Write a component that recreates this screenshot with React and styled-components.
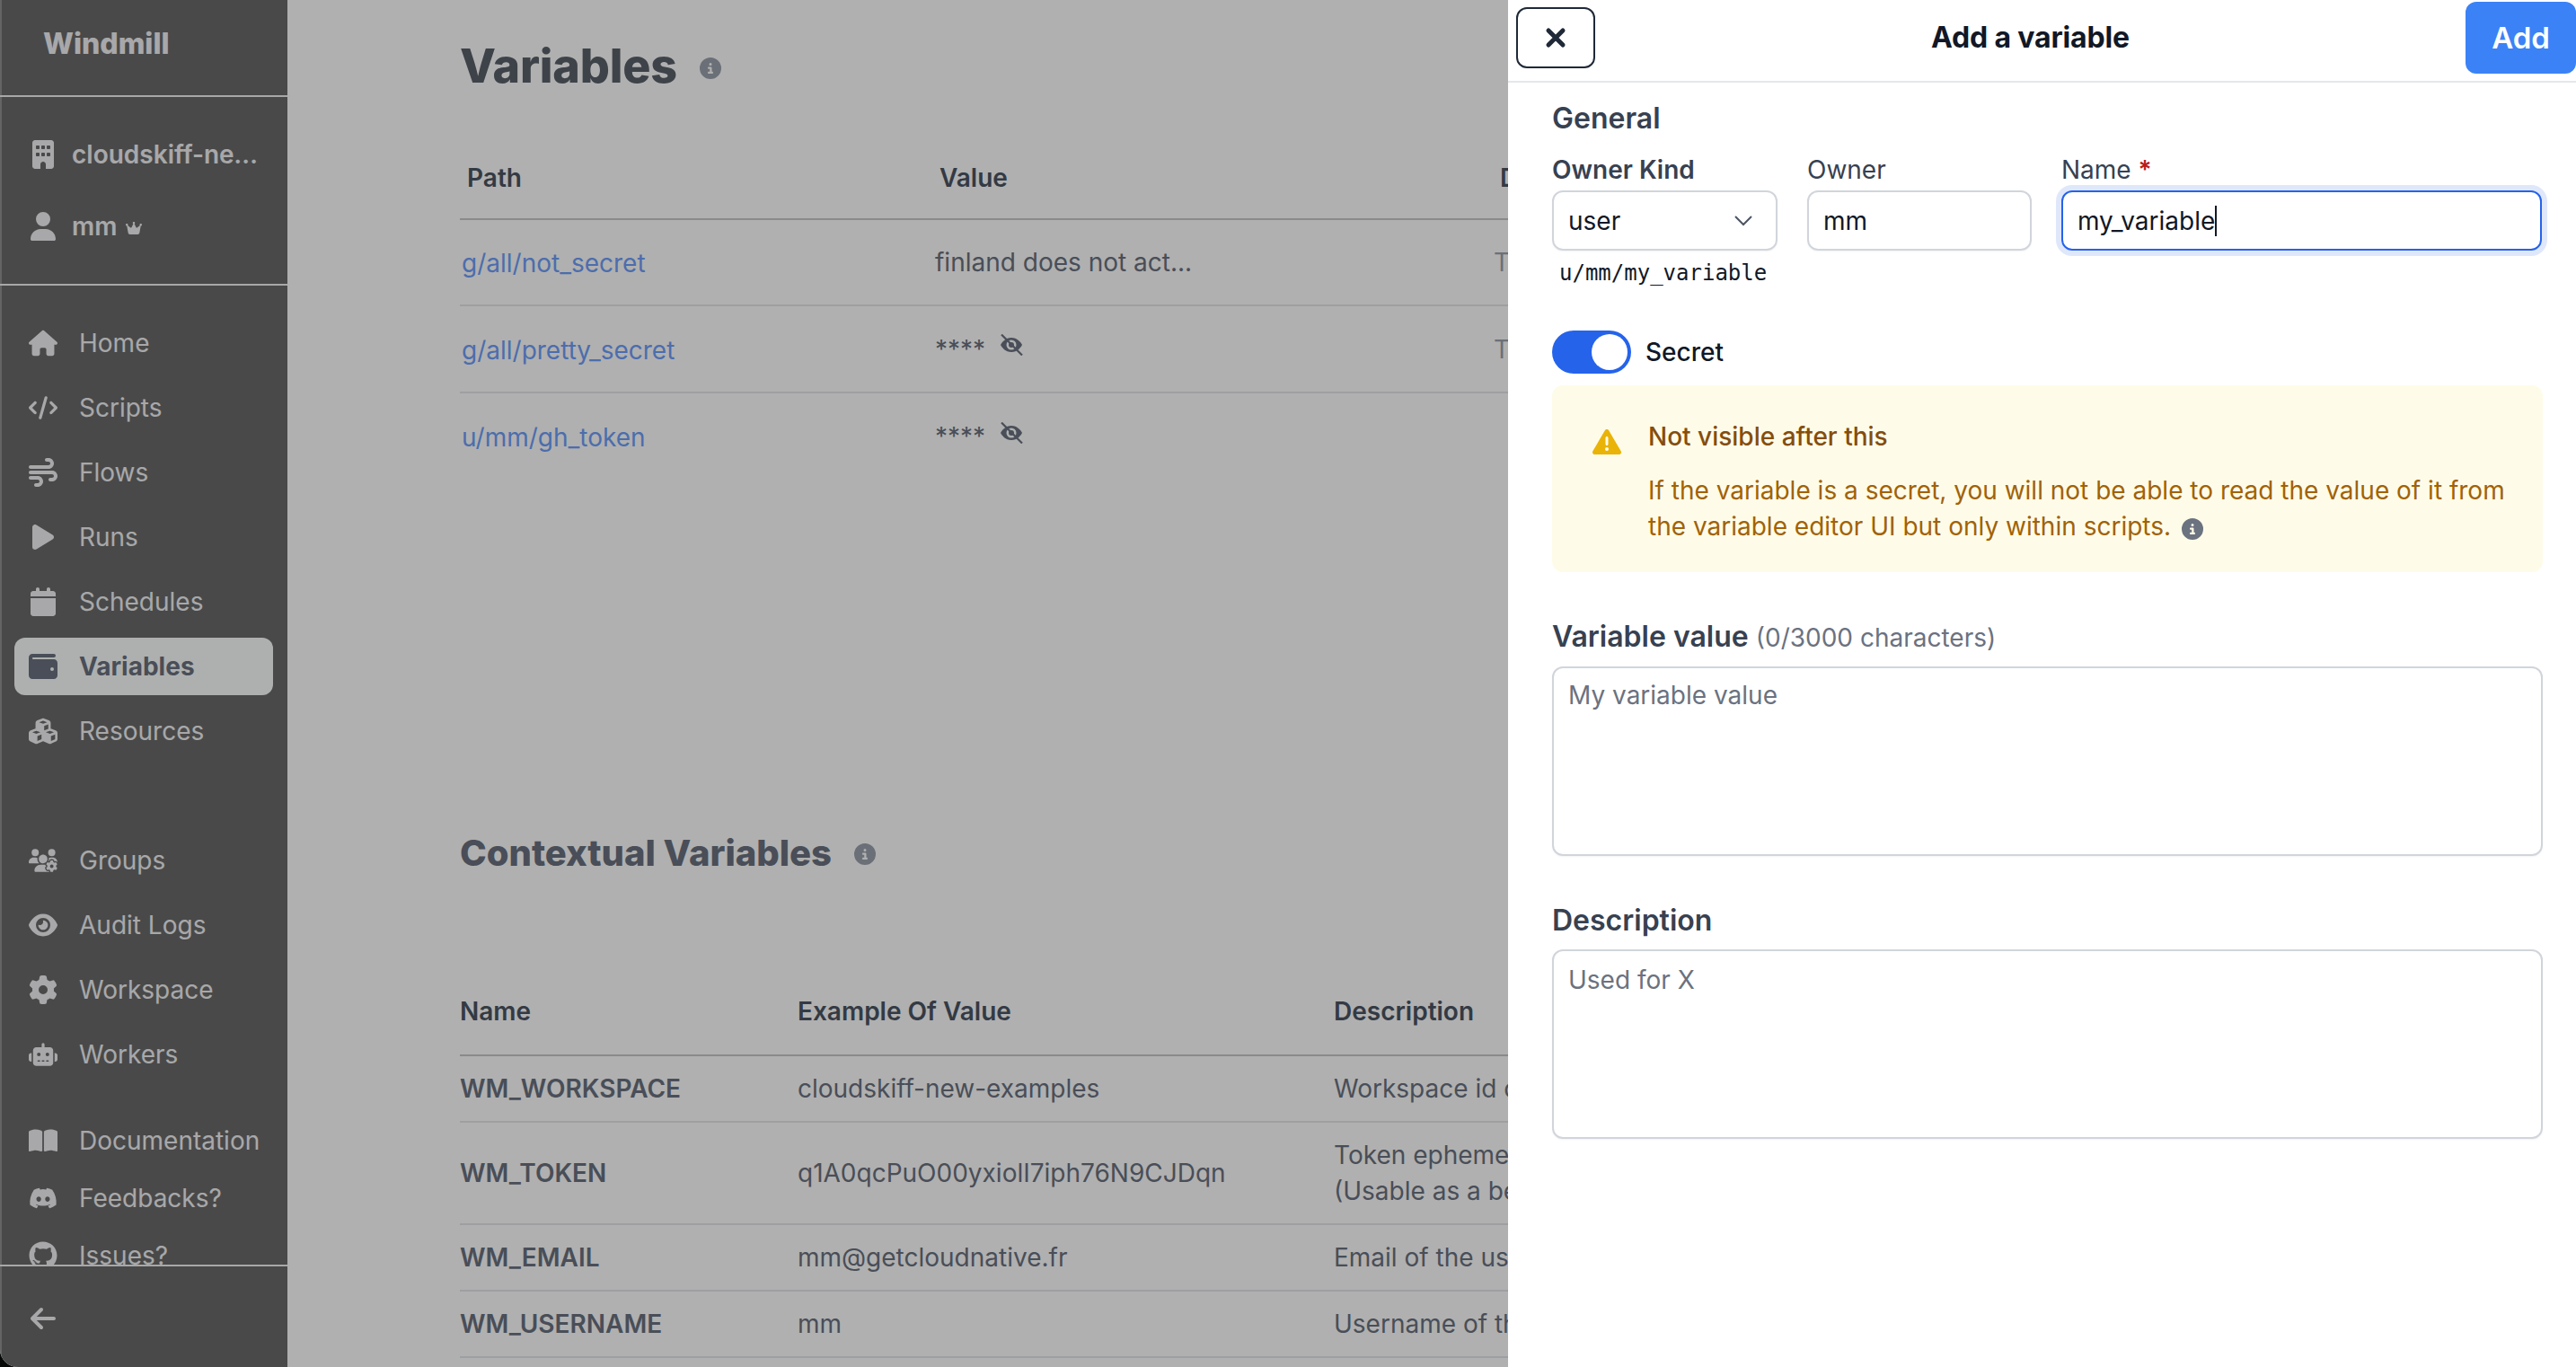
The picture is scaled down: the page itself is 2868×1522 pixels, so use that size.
import React from "react";
import styled, { createGlobalStyle } from "styled-components";
import {
  FaBuilding, FaUser, FaCrown, FaHouse, FaCode, FaWind, FaPlay, FaCalendar, FaWallet, FaCubes,
  FaUsersGear, FaEye, FaGear, FaRobot, FaBookOpen, FaDiscord, FaGithub, FaArrowLeft, FaCircleInfo,
  FaTriangleExclamation,
} from "react-icons/fa6";

const Global = createGlobalStyle`
  html, body { margin: 0; padding: 0; background: #050807; }
  * { box-sizing: border-box; }
  body { font-family: Inter, "Liberation Sans", sans-serif; font-size: 28px; }
`;

const Page = styled.div`
  position: relative;
  display: flex;
  width: 2868px;
  height: 1522px;
  overflow: hidden;
  background: #fff;
  border-bottom-left-radius: 20px;
`;

const Sidebar = styled.aside`
  flex: 0 0 320px;
  display: flex;
  flex-direction: column;
  height: 1522px;
  background: #6b6b6b;
  border-left: 2px solid #919191;
  color: #f3f4f6;
`;

const Brand = styled.div`
  flex: 0 0 108px;
  display: flex;
  align-items: center;
  padding: 0 0 10px 48px;
  font-size: 32px;
  font-weight: 800;
  color: #f3f4f6;
  border-bottom: 2px solid #f3f4f6;
  margin-left: -2px;
`;

const Account = styled.div`
  display: flex;
  flex-direction: column;
  padding: 24px 0;
  border-bottom: 2px solid #f3f4f6;
  margin-left: -2px;
`;

const AccountRow = styled.div`
  height: 80px;
  display: flex;
  align-items: center;
  gap: 16px;
  padding-left: 32px;
  font-weight: 600;
  font-size: 28px;
`;

const AccountIcon = styled.span`
  flex: 0 0 32px;
  display: flex;
  justify-content: center;
  font-size: 32px;
`;

const Ellipsis = styled.span`
  width: 208px;
  overflow: hidden;
  white-space: nowrap;
  text-overflow: ellipsis;
`;

const Crown = styled(FaCrown)`
  width: 20px;
  height: 16px;
  margin: 4px 0 0 -7px;
`;

const Nav = styled.nav`
  flex: 1;
  min-height: 0;
  overflow: hidden;
  padding: 32px 14px 0;
  display: flex;
  flex-direction: column;
`;

const NavGroup = styled.div`
  display: flex;
  flex-direction: column;
  gap: ${(p) => p.$gap}px;
  margin-bottom: ${(p) => p.$after}px;
`;

const NavItem = styled.div`
  flex: 0 0 64px;
  display: flex;
  align-items: center;
  gap: 24px;
  width: 288px;
  padding-left: 16px;
  border-radius: 12px;
  font-size: 28px;
  font-weight: ${(p) => (p.$active ? 700 : 400)};
  color: ${(p) => (p.$active ? "#6b7280" : "#f3f4f6")};
  background: ${(p) => (p.$active ? "#fcfffe" : "transparent")};
  svg { width: 32px; height: 32px; flex: 0 0 32px; }
`;

const Collapse = styled.div`
  flex: 0 0 114px;
  display: flex;
  align-items: center;
  padding: 4px 0 0 32px;
  border-top: 2px solid #f3f4f6;
  margin-left: -2px;
  svg { width: 32px; height: 32px; }
`;

const Main = styled.main`
  flex: 1;
  min-width: 0;
  padding: 0 0 0 192px;
  color: #4b5563;
`;

const PageTitle = styled.h1`
  margin: 0;
  height: 146px;
  display: flex;
  align-items: center;
  gap: 25px;
  font-size: 52px;
  font-weight: 800;
  letter-spacing: -0.2px;
  color: #5b616b;
  svg { width: 24px; height: 24px; color: #9ca3af; margin-top: 6px; }
`;

const SectionTitle = styled.h2`
  margin: 391px 0 105px;
  height: 48px;
  display: flex;
  align-items: center;
  gap: 25px;
  font-size: 40px;
  font-weight: 800;
  color: #6b7280;
  svg { width: 24px; height: 24px; color: #9ca3af; margin-top: 4px; }
`;

const Row = styled.div`
  display: grid;
  grid-template-columns: ${(p) => p.$cols};
  width: 1900px;
  height: ${(p) => p.$h}px;
  align-items: center;
  border-bottom: ${(p) => (p.$bare ? "0" : `2px solid ${p.$head ? "#c9c9c9" : "#e5e7eb"}`)};
  white-space: nowrap;
`;

const HeadRow = styled(Row)`
  padding-top: ${(p) => p.$top || 0}px;
`;

const HeadCell = styled.div`
  font-weight: 600;
  color: #4b5563;
  padding-left: ${(p) => p.$pad || 0}px;
`;

const PathLink = styled.div`
  color: #6f9ffb;
  padding: 2px 0 0 2px;
`;

const ValueCell = styled.div`
  display: flex;
  align-items: center;
  gap: 16px;
  color: #6b7280;
`;

const EyeOff = styled.svg`
  width: 26px;
  height: 24px;
  margin-top: -9px;
  color: #6b7280;
`;

const FaintCell = styled.div`
  color: #9ca3af;
`;

const NameCell = styled.div`
  font-weight: 600;
  color: #6b7280;
`;

const BodyCell = styled.div`
  color: #6b7280;
  line-height: 40px;
`;

const Overlay = styled.div`
  position: absolute;
  inset: 0;
  background: rgba(0, 0, 0, 0.31);
`;

const Drawer = styled.section`
  position: absolute;
  top: 0;
  right: 0;
  bottom: 0;
  width: 1189px;
  background: #fff;
  display: flex;
  flex-direction: column;
`;

const DrawerHead = styled.header`
  flex: 0 0 92px;
  display: flex;
  align-items: flex-start;
  justify-content: space-between;
  border-bottom: 2px solid #e5e7eb;
  padding-left: 9px;
`;

const CloseButton = styled.button`
  width: 88px;
  height: 68px;
  margin-top: 8px;
  display: flex;
  align-items: center;
  justify-content: center;
  background: #fff;
  border: 2px solid #1f2937;
  border-radius: 12px;
  color: #1f2937;
  padding: 0;
`;

const DrawerTitle = styled.div`
  align-self: center;
  font-size: 32px;
  font-weight: 700;
  color: #111827;
  margin-top: -8px;
  letter-spacing: -0.15px;
`;

const AddButton = styled.button`
  width: 123px;
  height: 80px;
  margin-top: 2px;
  background: #3b82f6;
  color: #fff;
  border: 0;
  border-radius: 12px;
  font: 600 33px Inter, sans-serif;
  padding: 0;
`;

const DrawerBody = styled.div`
  padding: 20px 37px 0 49px;
  display: flex;
  flex-direction: column;
`;

const SubTitle = styled.div`
  font-size: 32px;
  font-weight: 600;
  line-height: 40px;
  color: #374151;
  margin-top: ${(p) => p.$top || 0}px;
`;

const Muted = styled.span`
  font-size: 28px;
  font-weight: 400;
  color: #6b7280;
`;

const OwnerGrid = styled.div`
  display: grid;
  grid-template-columns: 251px 250px 535px;
  column-gap: 33px;
  row-gap: 3px;
  margin-top: 17px;
`;

const FieldLabel = styled.div`
  line-height: 40px;
  font-size: 28px;
  font-weight: ${(p) => (p.$bold ? 600 : 400)};
  color: #374151;
`;

const Required = styled.span`
  color: #b91c1c;
  font-weight: 600;
`;

const Box = styled.div`
  height: 67px;
  display: flex;
  align-items: center;
  justify-content: space-between;
  padding: 0 24px 0 16px;
  font-size: 28px;
  color: #111827;
  border: 2px solid #d1d5db;
  border-radius: 12px;
  box-shadow: 0 1px 2px rgba(0, 0, 0, 0.05);
`;

const FocusBox = styled(Box)`
  justify-content: flex-start;
  border-color: #2563eb;
  box-shadow: 0 0 0 6px #dfe7fb;
`;

const Caret = styled.span`
  display: inline-block;
  width: 2px;
  height: 34px;
  background: #111827;
`;

const PathHint = styled.div`
  font-family: "DejaVu Sans Mono", monospace;
  font-size: 24px;
  line-height: 32px;
  color: #111827;
  margin: 9px 0 0 8px;
`;

const SecretRow = styled.div`
  display: flex;
  align-items: center;
  gap: 16px;
  margin-top: 48px;
  font-size: 28px;
  font-weight: 500;
  color: #111827;
`;

const Toggle = styled.div`
  width: 88px;
  height: 48px;
  display: flex;
  justify-content: flex-end;
  align-items: center;
  padding-right: 4px;
  border-radius: 24px;
  background: #2563eb;
`;

const Knob = styled.span`
  width: 40px;
  height: 40px;
  border-radius: 50%;
  background: #fff;
`;

const Alert = styled.div`
  margin-top: 13px;
  height: 208px;
  padding: 37px 32px 0 45px;
  display: flex;
  gap: 30px;
  background: #fefce8;
  border-radius: 12px;
`;

const AlertIcon = styled(FaTriangleExclamation)`
  flex: 0 0 32px;
  width: 32px;
  height: 32px;
  margin-top: 10px;
  color: #eab308;
`;

const AlertTitle = styled.div`
  line-height: 40px;
  font-size: 28px;
  font-weight: 500;
  color: #854d0e;
`;

const AlertText = styled.div`
  margin-top: 20px;
  line-height: 40px;
  font-size: 28px;
  color: #a16207;
  svg { width: 24px; height: 24px; color: #6b7280; margin-left: 12px; vertical-align: -5px; }
`;

const TextArea = styled.textarea`
  display: block;
  width: 100%;
  height: 211px;
  margin-top: 12px;
  padding: ${(p) => p.$top}px 16px 12px;
  resize: none;
  font: 28px/36px Inter, sans-serif;
  border: 2px solid #d1d5db;
  border-radius: 12px;
  outline: none;
  box-shadow: 0 1px 2px rgba(0, 0, 0, 0.05);
  &::placeholder { color: #6b7280; opacity: 1; }
`;

const Chevron = () => (
  <svg width="24" height="24" viewBox="0 0 24 24" fill="none" stroke="#4b5563" strokeWidth="2">
    <path d="M3 7l9 9 9-9" />
  </svg>
);

const CloseMark = () => (
  <svg width="24" height="24" viewBox="0 0 24 24" fill="none" stroke="currentColor" strokeWidth="5" strokeLinecap="round">
    <path d="M4 4l16 16M20 4L4 20" />
  </svg>
);

const HiddenEye = () => (
  <EyeOff viewBox="0 0 26 24">
    <path fill="currentColor" d="M13 4C6.5 4 2.5 9 1 12c1.5 3 5.500 8 12 8s10.500-5 12-8c-1.500-3-5.500-8-12-8z" />
    <circle cx="13" cy="12" r="5.500" fill="#fff" />
    <circle cx="13" cy="12" r="3" fill="currentColor" />
    <path d="M2 0.500L25 23.500" stroke="currentColor" strokeWidth="2.200" />
  </EyeOff>
);

const V1 = "529px 622px 1fr";
const V2 = "376px 597px 1fr";

export default function App() {
  return (
    <Page>
      <Global />
      <Sidebar>
        <Brand>Windmill</Brand>
        <Account>
          <AccountRow><AccountIcon><FaBuilding /></AccountIcon><Ellipsis>cloudskiff-new-examples</Ellipsis></AccountRow>
          <AccountRow><AccountIcon><FaUser /></AccountIcon>mm <Crown /></AccountRow>
        </Account>
        <Nav>
          <NavGroup $gap={8} $after={80}>
            <NavItem><FaHouse />Home</NavItem>
            <NavItem><FaCode />Scripts</NavItem>
            <NavItem><FaWind />Flows</NavItem>
            <NavItem><FaPlay />Runs</NavItem>
            <NavItem><FaCalendar />Schedules</NavItem>
            <NavItem $active><FaWallet />Variables</NavItem>
            <NavItem><FaCubes />Resources</NavItem>
          </NavGroup>
          <NavGroup $gap={8} $after={32}>
            <NavItem><FaUsersGear />Groups</NavItem>
            <NavItem><FaEye />Audit Logs</NavItem>
            <NavItem><FaGear />Workspace</NavItem>
            <NavItem><FaRobot />Workers</NavItem>
          </NavGroup>
          <NavGroup $gap={0} $after={0}>
            <NavItem><FaBookOpen />Documentation</NavItem>
            <NavItem><FaDiscord />Feedbacks?</NavItem>
            <NavItem><FaGithub />Issues?</NavItem>
          </NavGroup>
        </Nav>
        <Collapse><FaArrowLeft /></Collapse>
      </Sidebar>

      <Main>
        <PageTitle>Variables <FaCircleInfo /></PageTitle>
        <HeadRow $cols={V1} $h={99} $head $top={7}>
          <HeadCell $pad={8}>Path</HeadCell>
          <HeadCell $pad={5}>Value</HeadCell>
          <HeadCell $pad={7}>Description</HeadCell>
        </HeadRow>
        <Row $cols={V1} $h={96}>
          <PathLink>g/all/not_secret</PathLink>
          <ValueCell>finland does not act...</ValueCell>
          <FaintCell>This is not a secret</FaintCell>
        </Row>
        <Row $cols={V1} $h={97}>
          <PathLink>g/all/pretty_secret</PathLink>
          <ValueCell>**** <HiddenEye /></ValueCell>
          <FaintCell>This is a secret</FaintCell>
        </Row>
        <Row $cols={V1} $h={96} $bare>
          <PathLink>u/mm/gh_token</PathLink>
          <ValueCell>**** <HiddenEye /></ValueCell>
        </Row>

        <SectionTitle>Contextual Variables <FaCircleInfo /></SectionTitle>
        <HeadRow $cols={V2} $h={98} $head>
          <HeadCell>Name</HeadCell>
          <HeadCell>Example Of Value</HeadCell>
          <HeadCell>Description</HeadCell>
        </HeadRow>
        <Row $cols={V2} $h={74}>
          <NameCell>WM_WORKSPACE</NameCell>
          <BodyCell>cloudskiff-new-examples</BodyCell>
          <BodyCell>Workspace id of the current script</BodyCell>
        </Row>
        <Row $cols={V2} $h={114}>
          <NameCell>WM_TOKEN</NameCell>
          <BodyCell>q1A0qcPuO00yxiolI7iph76N9CJDqn</BodyCell>
          <BodyCell>Token ephemeral to the current script<br />(Usable as a bearer token)</BodyCell>
        </Row>
        <Row $cols={V2} $h={74}>
          <NameCell>WM_EMAIL</NameCell>
          <BodyCell>mm@getcloudnative.fr</BodyCell>
          <BodyCell>Email of the user that executed the script</BodyCell>
        </Row>
        <Row $cols={V2} $h={74}>
          <NameCell>WM_USERNAME</NameCell>
          <BodyCell>mm</BodyCell>
          <BodyCell>Username of the user that executed the script</BodyCell>
        </Row>
      </Main>

      <Overlay />

      <Drawer>
        <DrawerHead>
          <CloseButton><CloseMark /></CloseButton>
          <DrawerTitle>Add a variable</DrawerTitle>
          <AddButton>Add</AddButton>
        </DrawerHead>
        <DrawerBody>
          <SubTitle>General</SubTitle>
          <OwnerGrid>
            <FieldLabel $bold>Owner Kind</FieldLabel>
            <FieldLabel>Owner</FieldLabel>
            <FieldLabel>Name <Required>*</Required></FieldLabel>
            <Box>user <Chevron /></Box>
            <Box>mm</Box>
            <FocusBox>my_variable<Caret /></FocusBox>
          </OwnerGrid>
          <PathHint>u/mm/my_variable</PathHint>
          <SecretRow><Toggle><Knob /></Toggle>Secret</SecretRow>
          <Alert>
            <AlertIcon />
            <div>
              <AlertTitle>Not visible after this</AlertTitle>
              <AlertText>
                If the variable is a secret, you will not be able to read the value of it from<br />
                the variable editor UI but only within scripts.<FaCircleInfo />
              </AlertText>
            </div>
          </Alert>
          <SubTitle $top={52}>Variable value <Muted>(0/3000 characters)</Muted></SubTitle>
          <TextArea $top={12} placeholder="My variable value" />
          <SubTitle $top={52}>Description</SubTitle>
          <TextArea $top={14} placeholder="Used for X" />
        </DrawerBody>
      </Drawer>
    </Page>
  );
}
